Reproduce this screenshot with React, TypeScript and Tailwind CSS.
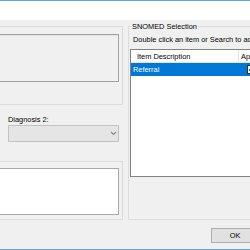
import React from "react";

const font = { fontFamily: '"Liberation Sans", Arial, sans-serif' };

function GroupBox(props: { className?: string; children?: React.ReactNode }) {
  return (
    <div className={"border border-[#dcdcdc] " + (props.className || "")}>
      {props.children}
    </div>
  );
}

export default function App() {
  return (
    <div
      className="w-[250px] h-[250px] overflow-hidden bg-[#f0f0f0] flex flex-col text-[7.4px] leading-[9px] text-black"
      style={font}
    >
      <div className="h-[1px] bg-[#5fa6e6] shrink-0" />
      <div className="h-[19px] bg-white shrink-0" />

      <div className="flex gap-[5px] ml-[-10px] mt-[6px]">
        {/* left column */}
        <div className="w-[133px] flex flex-col shrink-0">
          <GroupBox className="h-[79px] pt-[7px] pr-[3px]">
            <div className="h-[48px] bg-[#f0f0f0] border border-[#a2a2a2] shadow-[inset_1px_1px_0_#e3e3e3]" />
          </GroupBox>
          <div className="mt-[10px] ml-[18px] h-[9px]">Diagnosis 2:</div>
          <div className="mt-[1px] ml-[18px] mr-[4px] h-[17px] bg-[#e5e5e5] border border-[#c2c2c2] flex items-center justify-end pr-[1px]">
            <svg width="7" height="5" viewBox="0 0 7 5">
              <path d="M1 1 L3.5 3.5 L6 1" fill="none" stroke="#8a8a8a" strokeWidth="1.2" />
            </svg>
          </div>
          <GroupBox className="mt-[19px] h-[59px] pt-[6px] pr-[3px]">
            <div className="h-[47px] bg-white border border-[#a9a9a9]" />
          </GroupBox>
        </div>

        {/* right column */}
        <div className="w-[160px] shrink-0">
          <GroupBox className="h-[194px] pl-[1px] relative border-r-0">
            <div className="absolute left-[2px] top-[-5px] bg-[#f0f0f0] px-[1px] leading-[9px]">
              SNOMED Selection
            </div>
            <div className="mt-[8px] ml-[3px] h-[9px] whitespace-nowrap">
              Double click an item or Search to add
            </div>
            <div className="mt-[5px] h-[128px] bg-white border border-[#828282] border-r-0">
              <div className="h-[13px] flex border-b border-[#e5e5e5]">
                <div className="w-[108px] pl-[6px] flex items-center border-r border-[#e5e5e5]">
                  Item Description
                </div>
                <div className="pl-[2px] flex items-center">Ap</div>
              </div>
              <div className="h-[13px] bg-[#0078d7] text-white flex">
                <div className="w-[108px] pl-[2px] flex items-center">Referral</div>
                <div className="pl-[8px] flex items-center">
                  <div className="w-[9px] h-[9px] bg-white border border-[#333] flex items-center justify-center">
                    <svg width="7" height="7" viewBox="0 0 7 7">
                      <path d="M1 3.5 L3 5.5 L6.5 1.5" fill="none" stroke="#222" strokeWidth="1.2" />
                    </svg>
                  </div>
                </div>
              </div>
            </div>
          </GroupBox>
        </div>
      </div>

      <div className="mt-[8px] pl-[211px] flex">
        <div className="w-[48px] h-[15px] shrink-0 bg-[#e1e1e1] border border-[#adadad] flex items-center justify-center">
          OK
        </div>
      </div>

      <div className="mt-auto h-[1px] bg-[#5fa6e6] shrink-0" />
    </div>
  );
}
